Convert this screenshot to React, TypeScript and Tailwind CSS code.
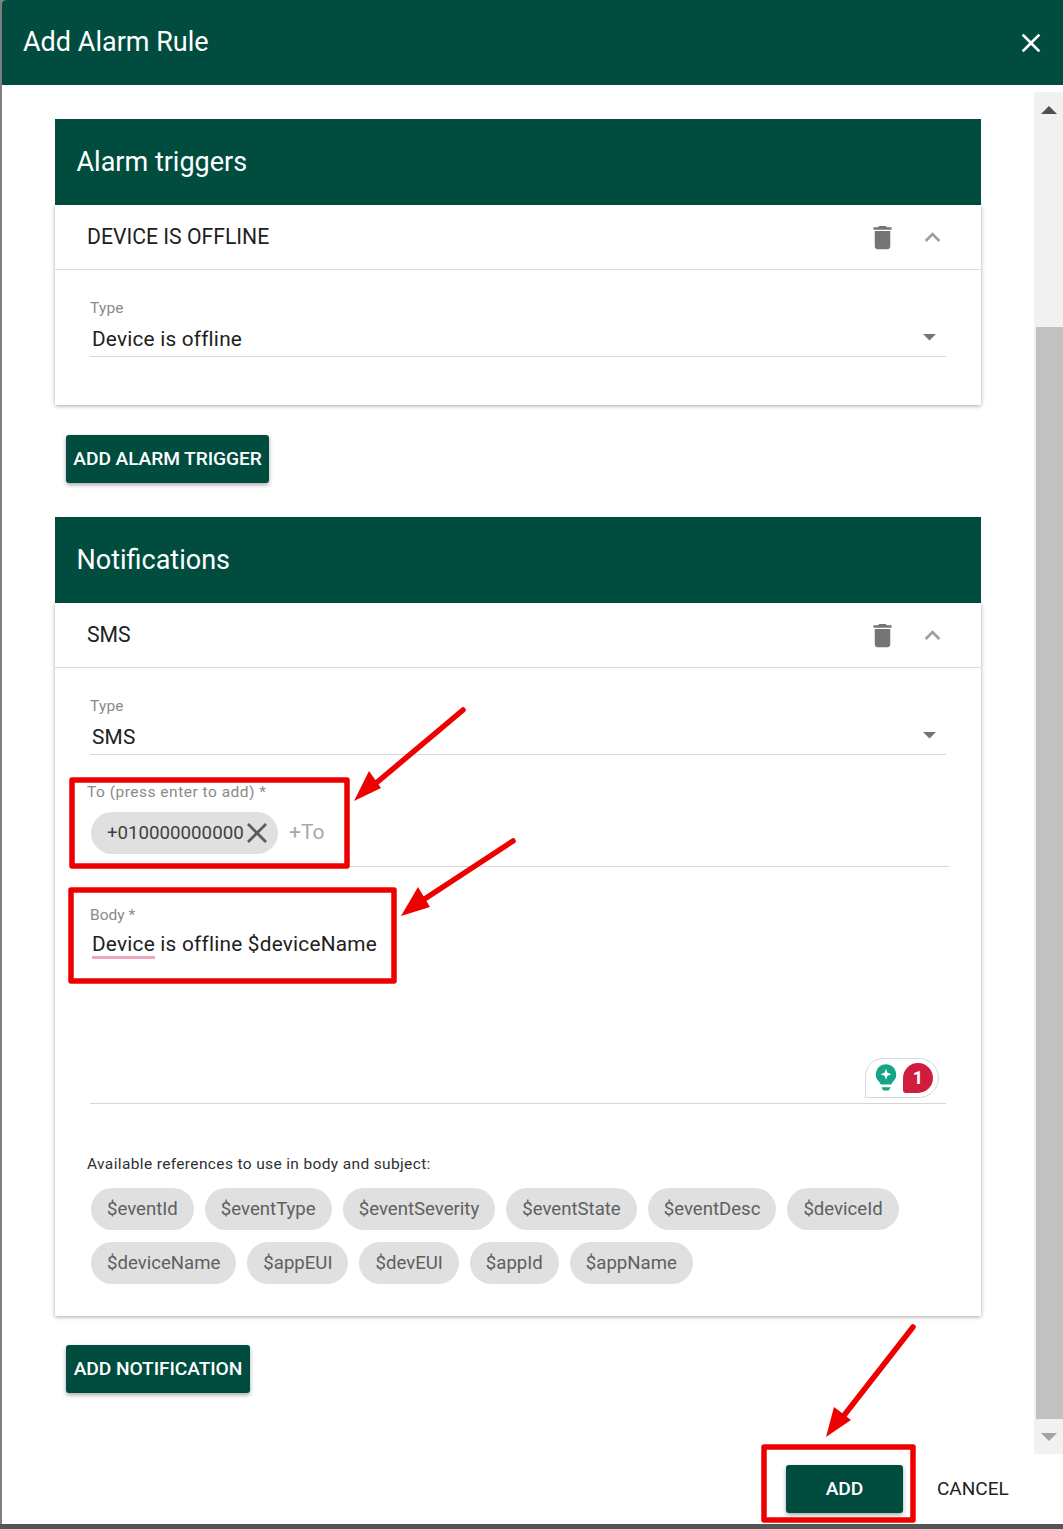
const GREEN = "bg-[#004d40]";

function MuiIcon({ d, className }: { d: string; className?: string }) {
  return (
    <svg viewBox="0 0 24 24" fill="currentColor" className={className}>
      <path d={d} />
    </svg>
  );
}

const icons = {
  close: "M19 6.41L17.59 5 12 10.59 6.41 5 5 6.41 10.59 12 5 17.59 6.41 19 12 13.41 17.59 19 19 17.59 13.41 12z",
  trash: "M6 19c0 1.1.9 2 2 2h8c1.1 0 2-.9 2-2V7H6v12zM19 4h-3.5l-1-1h-5l-1 1H5v2h14V4z",
  less: "M12 8l-6 6 1.41 1.41L12 10.83l4.59 4.58L18 14z",
  drop: "M7 10l5 5 5-5z",
};

function SectionHeader({ title }: { title: string }) {
  return (
    <div className={`${GREEN} flex h-[86px] items-center pl-[21.5px] text-[27px] leading-none text-white`}>{title}</div>
  );
}

function RowHeader({ title }: { title: string }) {
  return (
    <div className="flex h-[65px] items-center border-b border-[#dcdcdc] pl-[32px]">
      <span className="flex-1 text-[21.2px] text-[#212121]">{title}</span>
      <MuiIcon d={icons.trash} className="mr-[19px] h-[31px] w-[31px] text-[#757575]" />
      <MuiIcon d={icons.less} className="mr-[33px] h-[31px] w-[31px] text-[#9e9e9e]" />
    </div>
  );
}

function SelectField({ value }: { value: string }) {
  return (
    <div className="ml-[35px] mr-[35px] border-b border-[#d6d6d6]">
      <div className="h-[18px] text-[15.5px] leading-[18px] tracking-[0.2px] text-[#8a8a8a]">Type</div>
      <div className="flex h-[39px] items-center pl-[2px]">
        <span className="flex-1 pt-[6px] text-[20.8px] tracking-[0.2px] text-[#212121]">{value}</span>
        <MuiIcon d={icons.drop} className="mr-[1px] h-[31px] w-[31px] text-[#757575]" />
      </div>
    </div>
  );
}

function RefChip({ label }: { label: string }) {
  return (
    <span className="flex h-[42px] items-center rounded-full bg-[#e0e0e0] px-[16px] pt-[1px] text-[18.6px] text-[#5f5f5f]">
      {label}
    </span>
  );
}

function GreenButton({ label, className }: { label: string; className?: string }) {
  return (
    <button
      className={`${GREEN} flex h-[48px] items-center justify-center rounded-[3px] text-[19.2px] font-medium tracking-[-0.1px] text-white shadow-[0_2px_4px_rgba(0,0,0,0.35)] ${className ?? ""}`}
    >
      {label}
    </button>
  );
}

function GrammarlyBadge() {
  return (
    <div className="absolute left-[810px] top-[455px] flex h-[40px] w-[74px] items-center rounded-tl-[18px] rounded-r-[20px] border border-[#d5d8de] bg-white">
      <svg viewBox="0 0 24 30" className="ml-[9px] h-[28px] w-[22px]">
        <path d="M12 0a11 11 0 0 1 7 19.500V20a2 2 0 0 1-2 2H7a2 2 0 0 1-2-2v-.5A11 11 0 0 1 12 0z" fill="#15a586" />
        <path d="M7 25h10l-2 3.500H9z" fill="#15a586" />
        <path d="M12 5l1.600 4.400L18 11l-4.400 1.600L12 17l-1.600-4.400L6 11l4.400-1.600z" fill="#fff" />
      </svg>
      <span className="ml-[6px] flex h-[30px] w-[30px] items-center justify-center rounded-[15px] rounded-bl-[3px] bg-[#d01c3f] text-[18px] font-bold leading-none text-white">
        1
      </span>
    </div>
  );
}

function Annotations() {
  return (
    <svg className="pointer-events-none absolute left-0 top-0" width="1063" height="1529" fill="none">
      <rect x="72" y="780" width="275" height="86" stroke="#ee0000" strokeWidth="5.500" strokeLinejoin="round" />
      <rect x="71" y="890" width="323" height="91" stroke="#ee0000" strokeWidth="5.500" strokeLinejoin="round" />
      <rect x="764" y="1447" width="149" height="73" stroke="#ee0000" strokeWidth="5.500" strokeLinejoin="round" />
      <path d="M463 710L375 784" stroke="#ee0000" strokeWidth="5.500" strokeLinecap="round" />
      <path d="M354 801L369 771L381 788Z" fill="#ee0000" />
      <path d="M513 841L420 902" stroke="#ee0000" strokeWidth="5.500" strokeLinecap="round" />
      <path d="M401 916L418 887L430 907Z" fill="#ee0000" />
      <path d="M913 1327L842 1418" stroke="#ee0000" strokeWidth="5.500" strokeLinecap="round" />
      <path d="M826 1437L834 1407L851 1420Z" fill="#ee0000" />
    </svg>
  );
}

function Scrollbar() {
  return (
    <div className="mt-[7px] flex h-[1362px] w-[29px] flex-col bg-[#f1f1f1]">
      <div className="flex h-[235px] justify-center pt-[14px]">
        <div className="h-0 w-0 border-x-[8px] border-b-[8px] border-x-transparent border-b-[#505050]" />
      </div>
      <div className="ml-[2px] h-[1092px] bg-[#c1c1c1]" />
      <div className="flex flex-1 justify-center pt-[14px]">
        <div className="h-0 w-0 border-x-[8px] border-t-[8px] border-x-transparent border-t-[#a3a3a3]" />
      </div>
    </div>
  );
}

export default function App() {
  const refs = [
    ["$eventId", "$eventType", "$eventSeverity", "$eventState", "$eventDesc", "$deviceId"],
    ["$deviceName", "$appEUI", "$devEUI", "$appId", "$appName"],
  ];

  return (
    <div className="relative flex h-[1529px] w-[1063px] flex-col overflow-hidden bg-[#7f7f7f] font-['Roboto',sans-serif]">
      <div className="ml-[2px] flex h-[1524px] flex-col overflow-hidden rounded-tl-[4px] bg-white">
        <header className={`${GREEN} flex h-[85px] items-center pl-[21px] pr-[16px] text-white`}>
          <h1 className="mb-[1px] flex-1 text-[27px] leading-[32px] font-normal">Add Alarm Rule</h1>
          <MuiIcon d={icons.close} className="h-[32px] w-[32px]" />
        </header>

        <div className="flex flex-1">
          <main className="w-[1032px] pl-[53px] pt-[34px]">
            <section className="w-[926px]">
              <SectionHeader title="Alarm triggers" />
              <div className="h-[200px] bg-white shadow-[0_1px_4px_rgba(0,0,0,0.35)]">
                <RowHeader title="DEVICE IS OFFLINE" />
                <div className="pt-[29px]">
                  <SelectField value="Device is offline" />
                </div>
              </div>
              <GreenButton label="ADD ALARM TRIGGER" className="ml-[11px] mt-[30px] w-[203px]" />
            </section>

            <section className="mt-[34px] w-[926px]">
              <SectionHeader title="Notifications" />
              <div className="relative h-[713px] bg-white shadow-[0_1px_4px_rgba(0,0,0,0.35)]">
                <RowHeader title="SMS" />
                <div className="pt-[29px]">
                  <SelectField value="SMS" />
                </div>
                <div className="ml-[32px] mr-[32px] mt-[28px] h-[84px] border-b border-[#d6d6d6]">
                  <div className="h-[18px] text-[15.5px] leading-[18px] tracking-[0.5px] text-[#8a8a8a]">
                    To (press enter to add) *
                  </div>
                  <div className="ml-[4px] mt-[11px] flex items-center">
                    <span className="flex h-[42px] w-[187px] items-center rounded-full bg-[#e0e0e0] pl-[16px] text-[18.7px] text-[#404040]">
                      +010000000000
                      <svg viewBox="0 0 20 20" className="ml-[3px] h-[20px] w-[20px] text-[#5c5c5c]" stroke="currentColor" strokeWidth="2.800">
                        <path d="M1 1L19 19M19 1L1 19" />
                      </svg>
                    </span>
                    <span className="ml-[11px] text-[21px] text-[#a8a8a8]">+To</span>
                  </div>
                </div>
                <div className="ml-[35px] mr-[35px] mt-[38px] h-[199px] border-b border-[#d6d6d6]">
                  <div className="h-[18px] pt-[1px] text-[15.5px] leading-[18px] text-[#8a8a8a]">Body *</div>
                  <div className="mt-[6px] pl-[2px] text-[20.8px] leading-[30px] tracking-[0.22px] text-[#212121]">
                    <span className="border-b-[3px] border-[#f0a3bb]">Device</span> is offline $deviceName
                  </div>
                </div>
                <GrammarlyBadge />
                <div className="ml-[32px] mt-[51px] text-[15.5px] leading-[18px] tracking-[0.36px] text-[#303030]">
                  Available references to use in body and subject:
                </div>
                <div className="ml-[36px] mt-[15px] flex flex-col gap-[12px]">
                  {refs.map((row) => (
                    <div key={row[0]} className="flex gap-[11px]">
                      {row.map((r) => (
                        <RefChip key={r} label={r} />
                      ))}
                    </div>
                  ))}
                </div>
              </div>
              <GreenButton label="ADD NOTIFICATION" className="ml-[11px] mt-[29px] w-[184px]" />
            </section>

            <div className="mt-[72px] flex items-center">
              <GreenButton label="ADD" className="ml-[731px] w-[117px]" />
              <span className="ml-[34px] text-[19px] text-[#212121]">CANCEL</span>
            </div>
          </main>
          <Scrollbar />
        </div>
      </div>
      <div className="flex-1 bg-[#555555]" />
      <Annotations />
    </div>
  );
}
